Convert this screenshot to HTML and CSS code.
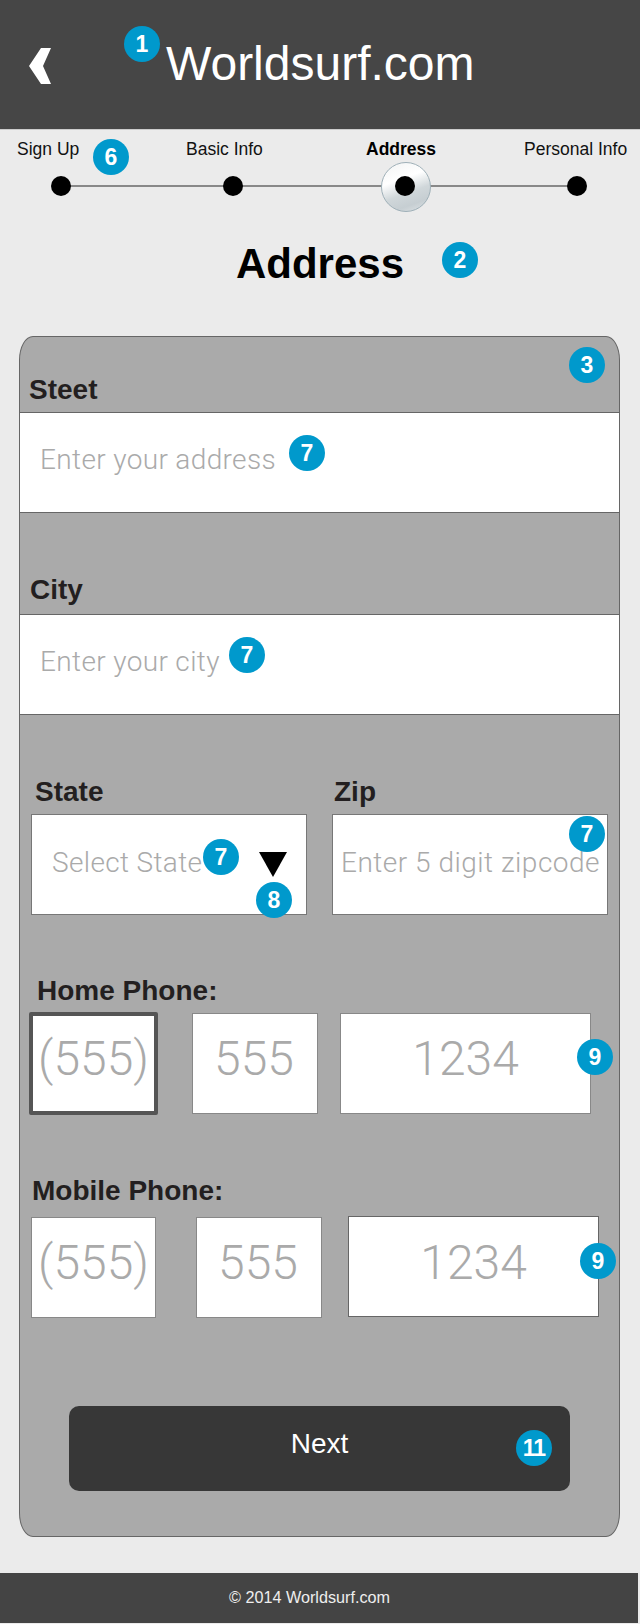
FILE: index.html
```html
<!DOCTYPE html>
<html lang="en">
<head>
  <meta charset="UTF-8">
  <title>Worldsurf.com - Address</title>
  <link rel="stylesheet" href="styles.css">
</head>
<body>

<div id="page">
  <!--top bar-->
  <div class="topbar">
    <svg class="back" width="22" height="36" viewBox="0 0 22 36"><polygon points="12,0 22,0 14,18 22,36 12,36 0,18" fill="#fff"/></svg>
    <div class="logo">Worldsurf.com</div>
  </div>

  <!--steps-->
  <div class="stepnames">
    <span>Sign Up</span>
    <span>Basic Info</span>
    <span class="current">Address</span>
    <span>Personal Info</span>
  </div>
  <div class="track">
    <i class="dot"></i>
    <i class="dot"></i>
    <i class="dot active"></i>
    <i class="dot"></i>
  </div>

  <h1 class="title">Address</h1>

  <!--the form-->
  <div class="card">
    <div class="label label-street">Steet</div>
    <div class="wide">Enter your address</div>

    <div class="label label-city">City</div>
    <div class="wide">Enter your city</div>

    <div class="pair">
      <div class="pair-col">
        <div class="label label-state">State</div>
        <div class="halfbox halfbox-state">Select State</div>
      </div>
      <div class="pair-col">
        <div class="label label-zip">Zip</div>
        <div class="halfbox halfbox-zip">Enter 5 digit zipcode</div>
      </div>
    </div>

    <div class="label label-home">Home Phone:</div>
    <div class="phone phone-home">
      <div class="num focused">(555)</div>
      <div class="num mid">555</div>
      <div class="num last">1234</div>
    </div>

    <div class="label label-mobile">Mobile Phone:</div>
    <div class="phone phone-mobile">
      <div class="num first">(555)</div>
      <div class="num mid">555</div>
      <div class="num last">1234</div>
    </div>

    <div class="next">Next</div>
  </div>

  <div class="footer">© 2014 Worldsurf.com</div>

  <!--dropdown arrow and numbered notes that sit on top of the page-->
  <svg class="arrow" width="28" height="25" viewBox="0 0 28 25"><polygon points="0,0 28,0 14,25" fill="#000"/></svg>
  <b class="note n1">1</b>
  <b class="note n2">2</b>
  <b class="note n3">3</b>
  <b class="note n6">6</b>
  <b class="note n7a">7</b>
  <b class="note n7b">7</b>
  <b class="note n7c">7</b>
  <b class="note n7d">7</b>
  <b class="note n8">8</b>
  <b class="note n9a">9</b>
  <b class="note n9b">9</b>
  <b class="note n11">11</b>
</div>

</body>
</html>
```

FILE: styles.css
```css
* {
  margin: 0;
  padding: 0;
  box-sizing: border-box;
}

body {
  background-color: #ebebeb;
  font-family: "Liberation Sans", Arial, sans-serif;
}

#page {
  width: 640px;
  height: 1624px;
  position: relative;
  overflow: hidden;
}

/* top bar */
.topbar {
  height: 130px;
  background-color: #464646;
  border-bottom: 1px solid #ccc;
  display: flex;
  align-items: flex-start;
  padding: 48px 0 0 29px;
}

.logo {
  margin: -12px 0 0 115px;
  color: #fff;
  font-size: 48px;
  line-height: 56px;
}

/* steps */
.stepnames {
  display: grid;
  grid-template-columns: 169px 180px 158px auto;
  padding: 9px 0 0 17px;
  font-size: 17.5px;
  line-height: 20px;
  color: #111;
}

.stepnames .current {
  font-weight: 700;
  color: #000;
}

.track {
  width: 536px;
  height: 20px;
  margin: 17px 0 0 51px;
  display: flex;
  justify-content: space-between;
  position: relative;
}

.track::before {
  content: "";
  position: absolute;
  left: 10px;
  right: 10px;
  top: 9px;
  height: 2px;
  background-color: #888;
}

.dot {
  width: 20px;
  height: 20px;
  background-color: #000;
  border-radius: 50%;
  position: relative;
}

.dot.active::before {
  content: "";
  position: absolute;
  left: -14px;
  top: -14px;
  width: 48px;
  height: 48px;
  border-radius: 50%;
  border: 1px solid #9fb0b8;
  background: linear-gradient(160deg, #f2f3f3, #fff 35%, #d0d7da 60%, #c6ced2 80%, #e0e5e7);
}

.dot.active::after {
  content: "";
  position: absolute;
  left: 0;
  top: 0;
  width: 20px;
  height: 20px;
  border-radius: 50%;
  background-color: #000;
}

.title {
  margin-top: 44px;
  text-align: center;
  font-size: 42px;
  line-height: 48px;
  font-weight: 700;
  color: #000;
}

/* form */
.card {
  width: 601px;
  height: 1201px;
  margin: 48px 0 0 19px;
  background-color: #aaa;
  border: 1px solid #666;
  border-radius: 14px / 24px;
}

.label {
  font-size: 28px;
  line-height: 32px;
  font-weight: 700;
  color: #231f20;
}

.label-street {
  margin: 37px 0 6px 9px;
}

.label-city {
  margin: 61px 0 8px 10px;
}

.label-state {
  margin: 61px 0 6px 4px;
}

.label-zip {
  margin: 61px 0 6px 2px;
}

.label-home {
  margin: 60px 0 5px 17px;
}

.label-mobile {
  margin: 60px 0 10px 12px;
}

.wide,
.halfbox {
  height: 101px;
  background-color: #fff;
  color: #aaa;
  font: 300 28px/32px Roboto, "Liberation Sans", sans-serif;
  letter-spacing: 0.35px;
  white-space: nowrap;
}

.wide {
  margin: 0 -1px;
  border: 1px solid #666;
  padding: 31px 0 0 20px;
}

.pair {
  display: flex;
  gap: 25px;
  padding-left: 11px;
}

.pair-col {
  width: 276px;
}

.halfbox {
  border: 1px solid #777;
  padding-top: 32px;
}

.halfbox-state {
  padding-left: 20px;
}

.halfbox-zip {
  padding-left: 8px;
  letter-spacing: 0.5px;
}

.phone {
  display: flex;
  align-items: flex-start;
}

.phone-home {
  padding-left: 9px;
}

.phone-mobile {
  padding-left: 11px;
}

.num {
  height: 101px;
  background-color: #fff;
  border: 1px solid #888;
  color: #aaa;
  font: 300 48px/56px Roboto, "Liberation Sans", sans-serif;
  text-align: center;
  padding-top: 17px;
}

.num.focused {
  width: 129px;
  height: 103px;
  border: 4px solid #555;
  border-radius: 2px;
  padding-top: 15px;
}

.num.first {
  width: 125px;
}

.num.mid {
  width: 126px;
  padding-right: 2px;
}

.num.last {
  width: 251px;
}

.phone-home .mid {
  margin: 1px 22px 0 34px;
}

.phone-home .last {
  margin-top: 1px;
}

.phone-mobile .mid {
  margin: 0 26px 0 40px;
}

.phone-mobile .last {
  margin-top: -1px;
  border-color: #666;
  padding-top: 18px;
}

.next {
  width: 501px;
  height: 85px;
  margin: 88px 0 0 49px;
  background-color: #373737;
  border-radius: 10px;
  color: #fff;
  text-align: center;
  font-size: 28px;
  line-height: 30px;
  padding-top: 23px;
}

.footer {
  width: 638px;
  height: 50px;
  margin-top: 36px;
  background-color: #444;
  color: #eee;
  font-size: 16.2px;
  line-height: 20px;
  text-align: center;
  padding: 14px 19px 0 0;
}

/* things that lie over the page */
.arrow {
  position: absolute;
  left: 259px;
  top: 852px;
}

.note {
  position: absolute;
  width: 36px;
  height: 36px;
  border-radius: 50%;
  background-color: #0099cc;
  color: #fff;
  font-size: 23px;
  line-height: 36px;
  text-align: center;
}

.n1 { left: 124px; top: 26px; }
.n2 { left: 442px; top: 242px; }
.n3 { left: 569px; top: 347px; }
.n6 { left: 93px; top: 139px; }
.n7a { left: 289px; top: 435px; }
.n7b { left: 229px; top: 637px; }
.n7c { left: 203px; top: 839px; }
.n7d { left: 569px; top: 816px; }
.n8 { left: 256px; top: 882px; }
.n9a { left: 577px; top: 1039px; }
.n9b { left: 580px; top: 1243px; }
.n11 { left: 516px; top: 1430px; letter-spacing: -1px; }
```
